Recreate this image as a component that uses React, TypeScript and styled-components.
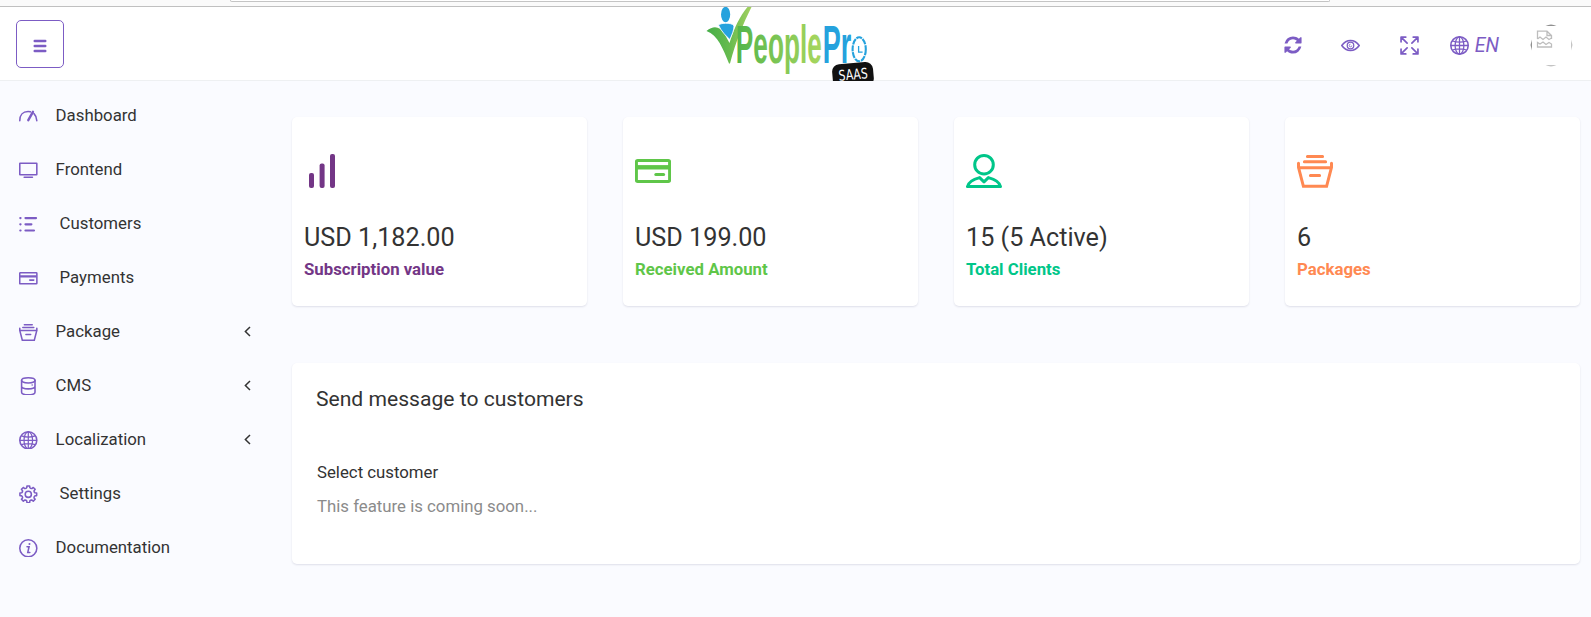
import React from 'react';
import styled, { createGlobalStyle } from 'styled-components';

const GlobalStyle = createGlobalStyle`
  * { box-sizing: border-box; }
  body {
    margin: 0;
    background: #fafbff;
    color: #333;
    font-family: Roboto, "Liberation Sans", sans-serif;
    font-size: 16.8px;
    line-height: 1.5;
  }
`;

const Page = styled.div`
  min-height: 617px;
  display: flex;
  flex-direction: column;
`;

const BrowserEdge = styled.div`
  height: 7px;
  padding: 0 261px 0 230px;
  background: #fafafa;
  border-bottom: 1px solid #c0c0c0;
`;

const AddressBar = styled.div`
  height: 2px;
  border: 1px solid #c4c4c4;
  border-top: 0;
  border-radius: 0 0 3px 3px;
  background: #fff;
`;

const Header = styled.header`
  height: 74px;
  padding: 0 18px 0 16px;
  display: grid;
  grid-template-columns: 690px 168px 1fr;
  background: #fff;
  border-bottom: 1px solid #eef0f2;
`;

const MenuButton = styled.button`
  width: 48px;
  height: 48px;
  margin-top: 13px;
  padding: 4px 0 0;
  display: flex;
  align-items: center;
  justify-content: center;
  background: #fff;
  border: 1px solid #7c5cc4;
  border-radius: 5px;
  color: #7c5cc4;
`;

const Logo = styled.svg`
  display: block;
  width: 168px;
  height: 74px;
`;

const Tools = styled.div`
  display: flex;
  justify-content: flex-end;
  align-items: center;
  height: 76px;
  color: #7c5cc4;
`;

const Tool = styled.span<{ $gap: number }>`
  display: flex;
  align-items: center;
  margin-right: ${(p) => p.$gap}px;
`;

const Language = styled.span`
  margin-left: 6px;
  padding-top: 1px;
  font-size: 19.5px;
  font-style: italic;
  line-height: 21px;
`;

const Body = styled.div`
  display: flex;
  flex: 1;
`;

const Sidebar = styled.nav`
  width: 272px;
  padding-top: 8px;
`;

const NavItem = styled.div<{ $indent?: boolean }>`
  height: 54px;
  padding: 0 20px 0 19px;
  display: flex;
  align-items: center;
  gap: ${(p) => (p.$indent ? 22 : 18)}px;
  color: #7c5cc4;
`;

const NavLabel = styled.span`
  flex: 1;
  color: #333;
`;

const Main = styled.main`
  flex: 1;
  padding: 36px 11px 0 20px;
`;

const Stats = styled.section`
  display: grid;
  grid-template-columns: repeat(4, 295px);
  gap: 36px;
`;

const Surface = styled.div`
  background: #fff;
  border-radius: 5px;
  box-shadow: 0 1px 2px rgba(60, 60, 100, 0.14);
`;

const StatCard = styled(Surface)<{ $accent: string }>`
  height: 189px;
  padding: 36px 12px 0;
  color: ${(p) => p.$accent};
`;

const StatValue = styled.div`
  margin-top: 32px;
  color: #333;
  font-size: 25.2px;
  line-height: 34px;
`;

const StatLabel = styled.div`
  font-weight: 700;
  line-height: 28px;
`;

const Panel = styled(Surface)`
  height: 201px;
  margin-top: 57px;
  padding: 20px 24px;
`;

const PanelTitle = styled.h4`
  margin: 0;
  font-size: 21.1px;
  font-weight: 400;
  line-height: 32px;
`;

const FieldLabel = styled.div`
  margin: 44px 0 0 1px;
  line-height: 26px;
`;

const Hint = styled.div`
  margin: 8px 0 0 1px;
  color: #8b8b8b;
  line-height: 26px;
`;

const IconSvg = styled.svg`
  display: block;
  flex: none;
`;

type IconName = 'bars' | 'card' | 'person' | 'basket' | 'gauge' | 'monitor' | 'list' | 'db' | 'globe' | 'gear' | 'info' | 'eye' | 'expand';

const gearPath = () => {
  const pts: string[] = [];
  for (let i = 0; i < 8; i++) {
    const at = (deg: number, r: number) => {
      const a = ((i * 45 + deg - 90) * Math.PI) / 180;
      return `${(18 + r * Math.cos(a)).toFixed(2)} ${(18 + r * Math.sin(a)).toFixed(2)}`;
    };
    pts.push(`${i ? 'L' : 'M'}${at(-9, 16.4)} L${at(9, 16.4)} L${at(13, 13.2)} Q${at(22.5, 11.6)} ${at(32, 13.2)}`);
  }
  return pts.join(' ') + 'Z';
};

const shapes: Record<IconName, React.ReactNode> = {
  bars: (
    <g fill="currentColor" stroke="none">
      <rect x="5" y="20" width="5" height="15" rx="2" />
      <rect x="15.6" y="10.5" width="5" height="24.5" rx="2" />
      <rect x="26" y="1" width="5" height="34" rx="2" />
    </g>
  ),
  card: (
    <>
      <rect x="1.4" y="7.4" width="33.2" height="21.2" rx="1.2" />
      <path d="M2 14.3H34" strokeWidth="4.4" />
      <path d="M20.8 21.5H28.6" strokeLinecap="round" />
    </>
  ),
  person: (
    <>
      <circle cx="18" cy="11.7" r="9.3" />
      <path d="M1.5 33.6H34.5C33.5 29 28 26 22.4 24.6L18 28.8L13.6 24.6C8 26 2.5 29 1.5 33.6Z" strokeLinejoin="round" />
    </>
  ),
  basket: (
    <g strokeLinecap="round">
      <path d="M10.4 3.4H25.6M7.4 8.7H28.6M13.4 22.4H22.6M2.2 14.7H33.8" />
      <path d="M1.5 10.2V14.3L6.4 33.3H29.6L34.5 14.3V10.2" />
    </g>
  ),
  gauge: (
    <g strokeLinecap="round">
      <path d="M1.5 26.5C1.5 16 7.5 8.8 17.5 8.8C19 8.8 20.5 9 22 9.4M29 12.8C32.5 16.4 34.5 21 34.5 26.5" />
      <path d="M18 25.5L27 9.3" strokeWidth="4.6" />
    </g>
  ),
  monitor: (
    <>
      <rect x="1.5" y="4.5" width="33" height="22" rx="0.5" />
      <path d="M10 31.5H26" strokeLinecap="round" />
    </>
  ),
  list: (
    <g strokeLinecap="round" strokeWidth="4.2">
      <path d="M12.5 6H33M12.5 18H24M12.5 30H29M2.5 6H3M2.5 18H3M2.5 30H3" />
    </g>
  ),
  db: (
    <>
      <ellipse cx="18" cy="6.5" rx="13" ry="5" />
      <path d="M5 6.5V29.5C5 32.3 10.8 34.5 18 34.5S31 32.3 31 29.5V6.5M5 18C5 20.8 10.8 23 18 23S31 20.8 31 18M25.5 15.5V15.6" strokeLinecap="round" />
    </>
  ),
  globe: (
    <>
      <circle cx="18" cy="18" r="16.5" />
      <g strokeWidth="2.4">
        <ellipse cx="18" cy="18" rx="8.3" ry="16.5" />
        <path d="M18 1.5V34.5M1.5 18H34.5M4.5 9.5C12 12 24 12 31.5 9.5M4.5 26.5C12 24 24 24 31.5 26.5" />
      </g>
    </>
  ),
  gear: (
    <>
      <path d={gearPath()} strokeLinejoin="round" />
      <circle cx="18" cy="18" r="6" />
    </>
  ),
  info: (
    <>
      <circle cx="18" cy="18" r="16.5" />
      <path d="M15.5 15H19.5L17 26H21" strokeLinecap="round" />
      <circle cx="20.3" cy="9.8" r="1" strokeWidth="2" />
    </>
  ),
  eye: (
    <>
      <path d="M1.5 18C6 11.5 11.5 8.5 18 8.5S30 11.5 34.5 18C30 24.5 24.5 27.5 18 27.5S6 24.5 1.5 18Z" />
      <circle cx="18" cy="18" r="6.2" strokeWidth="2.4" />
      <path d="M18 15.5A2.5 2.5 0 1 0 20.5 18" strokeWidth="1.6" />
    </>
  ),
  expand: (
    <g strokeLinecap="round" strokeLinejoin="round" strokeWidth="3.2">
      <path d="M2 11V2H11M2.5 2.5L13.5 13.5M25 2H34V11M33.5 2.5L22.5 13.5M2 25V34H11M2.5 33.5L13.5 22.5M34 25V34H25M33.5 33.5L22.5 22.5" />
    </g>
  ),
};

const Icon = ({ name, size = 18.6 }: { name: IconName; size?: number }) => (
  <IconSvg width={size} height={size} viewBox="0 0 36 36" fill="none" stroke="currentColor" strokeWidth="3">
    {shapes[name]}
  </IconSvg>
);

const RefreshIcon = () => (
  <IconSvg width="20" height="20" viewBox="0 0 1792 1792" fill="currentColor">
    <path d="M1639 1056q0 5-1 7-64 268-268 434.5t-478 166.5q-146 0-282.5-55t-243.5-157l-129 129q-19 19-45 19t-45-19-19-45v-448q0-26 19-45t45-19h448q26 0 45 19t19 45-19 45l-137 137q71 66 161 102t187 36q134 0 250-65t186-179q11-17 53-117 8-23 30-23h192q13 0 22.5 9.5t9.5 22.5zm25-800v448q0 26-19 45t-45 19h-448q-26 0-45-19t-19-45 19-45l138-138q-148-137-349-137-134 0-250 65t-186 179q-11 17-53 117-8 23-30 23h-199q-13 0-22.5-9.5t-9.5-22.5v-7q65-268 270-434.5t480-166.5q146 0 284 55.5t245 156.5l130-129q19-19 45-19t45 19 19 45z" />
  </IconSvg>
);

const Avatar = () => (
  <IconSvg width="43" height="43" viewBox="0 0 43 43" fill="none">
    <path d="M15.5 1.5Q21 0 26.5 1.5Z" fill="#222" />
    <path d="M1.5 15.5Q0 21 1.5 26.5Z" fill="#222" />
    <path d="M41.5 15.5Q43 21 41.5 26.5Z" fill="#888" />
    <path d="M15.5 41.5Q21 43 26.5 41.5Z" fill="#888" />
    <g stroke="#bdbdbd" strokeWidth="1.3">
      <path d="M7.5 15V7.2H17L21.5 11.5V15M17 7.2V11.5H21.5" />
      <path d="M7.5 15L10 13L13 15.5L16 13L19 15.5L21.5 14" />
      <path d="M7.5 23V18.5L10 20L13 18L16 20.5L19 18.5L21.5 20V23Z" />
    </g>
  </IconSvg>
);

const Chevron = () => (
  <IconSvg width="8" height="12" viewBox="0 0 8 12" fill="none" stroke="#333" strokeWidth="1.5">
    <path d="M6 1L1.4 5.5L6 10" />
  </IconSvg>
);

const BrandLogo = () => (
  <Logo viewBox="706 7 168 74">
    <defs>
      <linearGradient id="leaf" x1="0" x2="1">
        <stop offset="0" stopColor="#46ae49" />
        <stop offset=".5" stopColor="#66bb4e" />
        <stop offset="1" stopColor="#a4d160" />
      </linearGradient>
      <linearGradient id="word" x1="0" x2="1">
        <stop offset="0" stopColor="#52b54b" />
        <stop offset="1" stopColor="#a9d75f" />
      </linearGradient>
    </defs>
    <path d="M706.5 31C714 24.5 720 27 724 33L729.5 43C734 28 740 16 747.5 7H751.5C743 24 736 41 730 63.5H729C723 49 718 35 706.5 31Z" fill="url(#leaf)" />
    <path d="M718.5 25C720 24 722 23.3 725.5 23.3C729 23.3 732.5 23.5 734 26C734 30 732 35 729.8 39.5C726 36 721 31 718.5 25Z" fill="#25a2dd" stroke="#fff" strokeWidth=".8" />
    <ellipse cx="725.6" cy="14.5" rx="4.6" ry="7.7" fill="#25a2dd" />
    <g fontFamily="Liberation Sans" fontWeight="700" fontSize="53.5">
      <text transform="translate(735.8 63.3) scale(.5 1)" textLength="172" lengthAdjust="spacingAndGlyphs" fill="url(#word)">People</text>
      <text transform="translate(822.8 63.3) scale(.5 1)" textLength="57" lengthAdjust="spacingAndGlyphs" fill="#25a2dd">Pr</text>
    </g>
    <ellipse cx="859.2" cy="49.3" rx="6.6" ry="12" fill="#fff" stroke="#25a2dd" strokeWidth="2.1" strokeDasharray="6 .9" />
    <path d="M858.6 46V52.2H862.6" fill="none" stroke="#25a2dd" strokeWidth="1.3" />
    <g transform="rotate(-5 853 73)">
      <rect x="832.3" y="63" width="41" height="24" rx="7.5" fill="#111" />
      <text x="838.5" y="79.5" fill="#fff" fontFamily="DejaVu Sans" fontSize="14.5" textLength="29" lengthAdjust="spacingAndGlyphs">SAAS</text>
    </g>
  </Logo>
);

const navigation: { label: string; icon: IconName; indent?: boolean; expandable?: boolean }[] = [
  { label: 'Dashboard', icon: 'gauge' },
  { label: 'Frontend', icon: 'monitor' },
  { label: 'Customers', icon: 'list', indent: true },
  { label: 'Payments', icon: 'card', indent: true },
  { label: 'Package', icon: 'basket', expandable: true },
  { label: 'CMS', icon: 'db', expandable: true },
  { label: 'Localization', icon: 'globe', expandable: true },
  { label: 'Settings', icon: 'gear', indent: true },
  { label: 'Documentation', icon: 'info' },
];

const stats: { value: string; label: string; icon: IconName; accent: string }[] = [
  { value: 'USD 1,182.00', label: 'Subscription value', icon: 'bars', accent: '#733686' },
  { value: 'USD 199.00', label: 'Received Amount', icon: 'card', accent: '#5fc649' },
  { value: '15 (5 Active)', label: 'Total Clients', icon: 'person', accent: '#00c689' },
  { value: '6', label: 'Packages', icon: 'basket', accent: '#ff8952' },
];

export default function App() {
  return (
    <Page>
      <GlobalStyle />
      <BrowserEdge><AddressBar /></BrowserEdge>
      <Header>
        <MenuButton aria-label="Toggle menu">
          <IconSvg width="14" height="14" viewBox="0 0 14 14" stroke="currentColor" strokeWidth="2.4" strokeLinecap="round">
            <path d="M1.7 2H12.3M1.7 7H12.3M1.7 12H12.3" />
          </IconSvg>
        </MenuButton>
        <BrandLogo />
        <Tools>
          <Tool $gap={38}><RefreshIcon /></Tool>
          <Tool $gap={40}><Icon name="eye" size={19} /></Tool>
          <Tool $gap={31}><Icon name="expand" size={19} /></Tool>
          <Tool $gap={31}><Icon name="globe" size={19} /><Language>EN</Language></Tool>
          <Avatar />
        </Tools>
      </Header>
      <Body>
        <Sidebar>
          {navigation.map((item) => (
            <NavItem key={item.label} $indent={item.indent}>
              <Icon name={item.icon} />
              <NavLabel>{item.label}</NavLabel>
              {item.expandable && <Chevron />}
            </NavItem>
          ))}
        </Sidebar>
        <Main>
          <Stats>
            {stats.map((stat) => (
              <StatCard key={stat.label} $accent={stat.accent}>
                <Icon name={stat.icon} size={36} />
                <StatValue>{stat.value}</StatValue>
                <StatLabel>{stat.label}</StatLabel>
              </StatCard>
            ))}
          </Stats>
          <Panel>
            <PanelTitle>Send message to customers</PanelTitle>
            <FieldLabel>Select customer</FieldLabel>
            <Hint>This feature is coming soon...</Hint>
          </Panel>
        </Main>
      </Body>
    </Page>
  );
}
